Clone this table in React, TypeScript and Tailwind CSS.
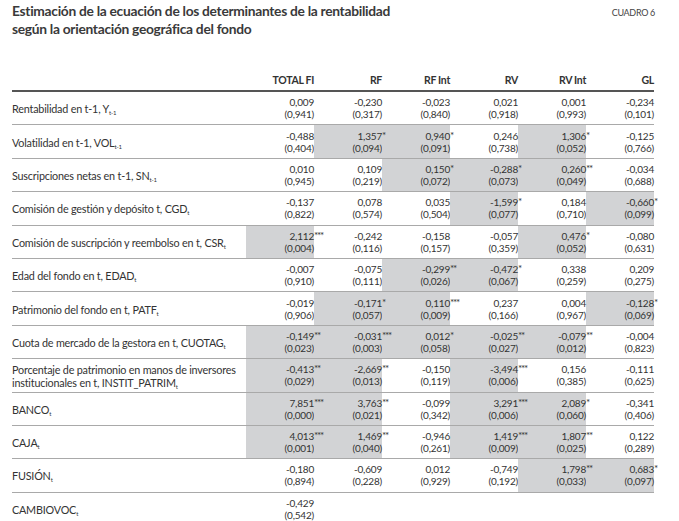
import React from 'react';

type Cell = [string, string, string, boolean] | null; // value, stars, p-value, shaded

type Row = {
  label: React.ReactNode;
  cells: Cell[];
};

const Sub = ({ children }: { children: React.ReactNode }) => (
  <sub className="relative top-[2px] text-[6px] leading-none">{children}</sub>
);

const c = (v: string, s: string, p: string, shaded = false): Cell => [v, s, p, shaded];

const rows: Row[] = [
  {
    label: <>Rentabilidad en t-1, Y<Sub>t-1</Sub></>,
    cells: [c('0,009', '', '0,941'), c('-0,230', '', '0,317'), c('-0,023', '', '0,840'), c('0,021', '', '0,918'), c('0,001', '', '0,993'), c('-0,234', '', '0,101')],
  },
  {
    label: <>Volatilidad en t-1, VOL<Sub>t-1</Sub></>,
    cells: [c('-0,488', '', '0,404'), c('1,357', '*', '0,094', true), c('0,940', '*', '0,091', true), c('0,246', '', '0,738'), c('1,306', '*', '0,052', true), c('-0,125', '', '0,766')],
  },
  {
    label: <>Suscripciones netas en t-1, SN<Sub>t-1</Sub></>,
    cells: [c('0,010', '', '0,945'), c('0,109', '', '0,219'), c('0,150', '*', '0,072', true), c('-0,288', '*', '0,073', true), c('0,260', '**', '0,049', true), c('-0,034', '', '0,688')],
  },
  {
    label: <>Comisión de gestión y depósito t, CGD<Sub>t</Sub></>,
    cells: [c('-0,137', '', '0,822'), c('0,078', '', '0,574'), c('0,035', '', '0,504'), c('-1,599', '*', '0,077', true), c('0,184', '', '0,710'), c('-0,660', '*', '0,099', true)],
  },
  {
    label: <>Comisión de suscripción y reembolso en t, CSR<Sub>t</Sub></>,
    cells: [c('2,112', '***', '0,004', true), c('-0,242', '', '0,116'), c('-0,158', '', '0,157'), c('-0,057', '', '0,359'), c('0,476', '*', '0,052', true), c('-0,080', '', '0,631')],
  },
  {
    label: <>Edad del fondo en t, EDAD<Sub>t</Sub></>,
    cells: [c('-0,007', '', '0,910'), c('-0,075', '', '0,111'), c('-0,299', '**', '0,026', true), c('-0,472', '*', '0,067', true), c('0,338', '', '0,259'), c('0,209', '', '0,275')],
  },
  {
    label: <>Patrimonio del fondo en t, PATF<Sub>t</Sub></>,
    cells: [c('-0,019', '', '0,906'), c('-0,171', '*', '0,057', true), c('0,110', '***', '0,009', true), c('0,237', '', '0,166'), c('0,004', '', '0,967'), c('-0,128', '*', '0,069', true)],
  },
  {
    label: <>Cuota de mercado de la gestora en t, CUOTAG<Sub>t</Sub></>,
    cells: [c('-0,149', '**', '0,023', true), c('-0,031', '***', '0,003', true), c('0,012', '*', '0,058', true), c('-0,025', '**', '0,027', true), c('-0,079', '**', '0,012', true), c('-0,004', '', '0,823')],
  },
  {
    label: (
      <>
        Porcentaje de patrimonio en manos de inversores
        <br />
        institucionales en t, INSTIT_PATRIM<Sub>t</Sub>
      </>
    ),
    cells: [c('-0,413', '**', '0,029', true), c('-2,669', '**', '0,013', true), c('-0,150', '', '0,119'), c('-3,494', '***', '0,006', true), c('0,156', '', '0,385'), c('-0,111', '', '0,625')],
  },
  {
    label: <>BANCO<Sub>t</Sub></>,
    cells: [c('7,851', '***', '0,000', true), c('3,763', '**', '0,021', true), c('-0,099', '', '0,342'), c('3,291', '***', '0,006', true), c('2,089', '*', '0,060', true), c('-0,341', '', '0,406')],
  },
  {
    label: <>CAJA<Sub>t</Sub></>,
    cells: [c('4,013', '***', '0,001', true), c('1,469', '**', '0,040', true), c('-0,946', '', '0,261'), c('1,419', '***', '0,009', true), c('1,807', '**', '0,025', true), c('0,122', '', '0,289')],
  },
  {
    label: <>FUSIÓN<Sub>t</Sub></>,
    cells: [c('-0,180', '', '0,894'), c('-0,609', '', '0,228'), c('0,012', '', '0,929'), c('-0,749', '', '0,192'), c('1,798', '**', '0,033', true), c('0,683', '*', '0,097', true)],
  },
  {
    label: <>CAMBIOVOC<Sub>t</Sub></>,
    cells: [c('-0,429', '', '0,542'), null, null, null, null, null],
  },
];

const headers = ['TOTAL FI', 'RF', 'RF Int', 'RV', 'RV Int', 'GL'];

const grid = 'grid grid-cols-[234px_repeat(6,68px)]';

export default function App() {
  return (
    <div
      className="w-[679px] h-[521px] overflow-hidden bg-white text-[#333] pl-[12px]"
      style={{ fontFamily: 'Lato, "Open Sans", sans-serif' }}
    >
      {/* Title */}
      <div className="flex justify-between w-[643px] pt-[2px]">
        <h1 className="text-[13.8px] leading-[18px] font-bold tracking-[-0.3px] text-[#3a3a3a]">
          Estimación de la ecuación de los determinantes de la rentabilidad
          <br />
          según la orientación geográfica del fondo
        </h1>
        <span className="text-[9px] tracking-[-0.3px] pt-[4px] text-[#444]">CUADRO 6</span>
      </div>

      {/* Table */}
      <div className="mt-[36px] w-[642px]">
        <div className={`${grid} border-b-2 border-[#555] h-[18px] items-start`}>
          <div />
          {headers.map((h) => (
            <div key={h} className="text-right text-[10.5px] font-bold tracking-[-0.3px] leading-[13px]">
              {h}
            </div>
          ))}
        </div>

        {rows.map((row, i) => (
          <div
            key={i}
            className={`${grid} h-[33.4px] ${i < rows.length - 1 ? 'border-b border-[#a9a9a9]' : ''}`}
          >
            <div className="flex items-center text-[10.8px] leading-[13px] tracking-[-0.2px] pt-[1px]">
              <span>{row.label}</span>
            </div>
            {row.cells.map((cell, j) => (
              <div
                key={j}
                className={`flex flex-col items-end justify-center text-[10px] leading-[12px] tracking-[-0.2px] ${
                  cell && cell[3] ? 'bg-[#d2d3d5]' : ''
                }`}
              >
                {cell && (
                  <>
                    <span className="relative">
                      {cell[0]}
                      {cell[1] && (
                        <span className="absolute left-full top-[1px] text-[10px] leading-[8px] tracking-[-1.3px]">
                          {cell[1]}
                        </span>
                      )}
                    </span>
                    <span>({cell[2]})</span>
                  </>
                )}
              </div>
            ))}
          </div>
        ))}
      </div>
    </div>
  );
}
